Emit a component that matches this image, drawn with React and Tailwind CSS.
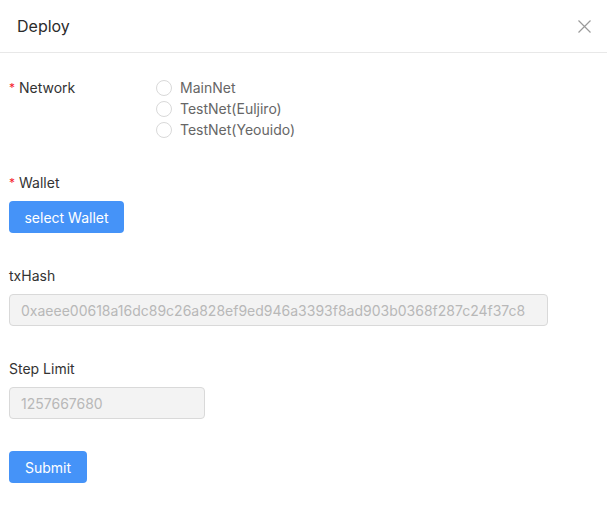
import { useState } from "react";

const networks = ["MainNet", "TestNet(Euljiro)", "TestNet(Yeouido)"];

function Label({ required, children }) {
  return (
    <div className="h-[21px] leading-[21px] text-[14px] text-[#333]">
      {required && <span className="text-[#f5222d] text-[12px] mr-[4px] align-top">*</span>}
      {children}
    </div>
  );
}

export default function App() {
  const [network, setNetwork] = useState(null);

  return (
    <div className="w-[607px] h-[507px] bg-white font-['Inter','Liberation_Sans',sans-serif] text-[#333]">
      <div className="h-[53px] border-b border-[#e8e8e8] flex items-center justify-between pl-[17px] pr-[16px]">
        <div className="text-[16px] font-normal text-[#2b2b2b]">Deploy</div>
        <button className="w-[14px] h-[14px] flex items-center justify-center">
          <svg width="13" height="13" viewBox="0 0 13 13">
            <path d="M0.5 0.5L12.5 12.5M12.5 0.5L0.5 12.5" stroke="#9a9a9a" strokeWidth="1.2" fill="none" />
          </svg>
        </button>
      </div>

      <div className="pl-[9px] pt-[24px]">
        <div className="flex">
          <div className="w-[147px]">
            <Label required>Network</Label>
          </div>
          <div className="flex flex-col">
            {networks.map((n) => (
              <label key={n} className="h-[21px] flex items-center cursor-pointer text-[14px] text-[#666]" onClick={() => setNetwork(n)}>
                <span className="w-[16px] h-[16px] rounded-full border border-[#d9d9d9] mr-[8px] flex items-center justify-center">
                  {network === n && <span className="w-[8px] h-[8px] rounded-full bg-[#4593f8]" />}
                </span>
                {n}
              </label>
            ))}
          </div>
        </div>

        <div className="mt-[32px]">
          <Label required>Wallet</Label>
          <button className="mt-[8px] h-[32px] w-[115px] rounded-[4px] bg-[#4593f8] text-white text-[14px]">
            select Wallet
          </button>
        </div>

        <div className="mt-[32px]">
          <Label>txHash</Label>
          <div className="mt-[8px] h-[32px] w-[539px] rounded-[4px] border border-[#d9d9d9] bg-[#f3f3f3] pl-[11px] flex items-center text-[14px] text-[#b8b8b8] overflow-hidden whitespace-nowrap">
            0xaeee00618a16dc89c26a828ef9ed946a3393f8ad903b0368f287c24f37c8
          </div>
        </div>

        <div className="mt-[32px]">
          <Label>Step Limit</Label>
          <div className="mt-[8px] h-[32px] w-[196px] rounded-[4px] border border-[#d9d9d9] bg-[#f3f3f3] pl-[11px] flex items-center text-[14px] text-[#b8b8b8]">
            1257667680
          </div>
        </div>

        <button className="mt-[32px] h-[32px] w-[78px] rounded-[4px] bg-[#4593f8] text-white text-[14px]">
          Submit
        </button>
      </div>
    </div>
  );
}
